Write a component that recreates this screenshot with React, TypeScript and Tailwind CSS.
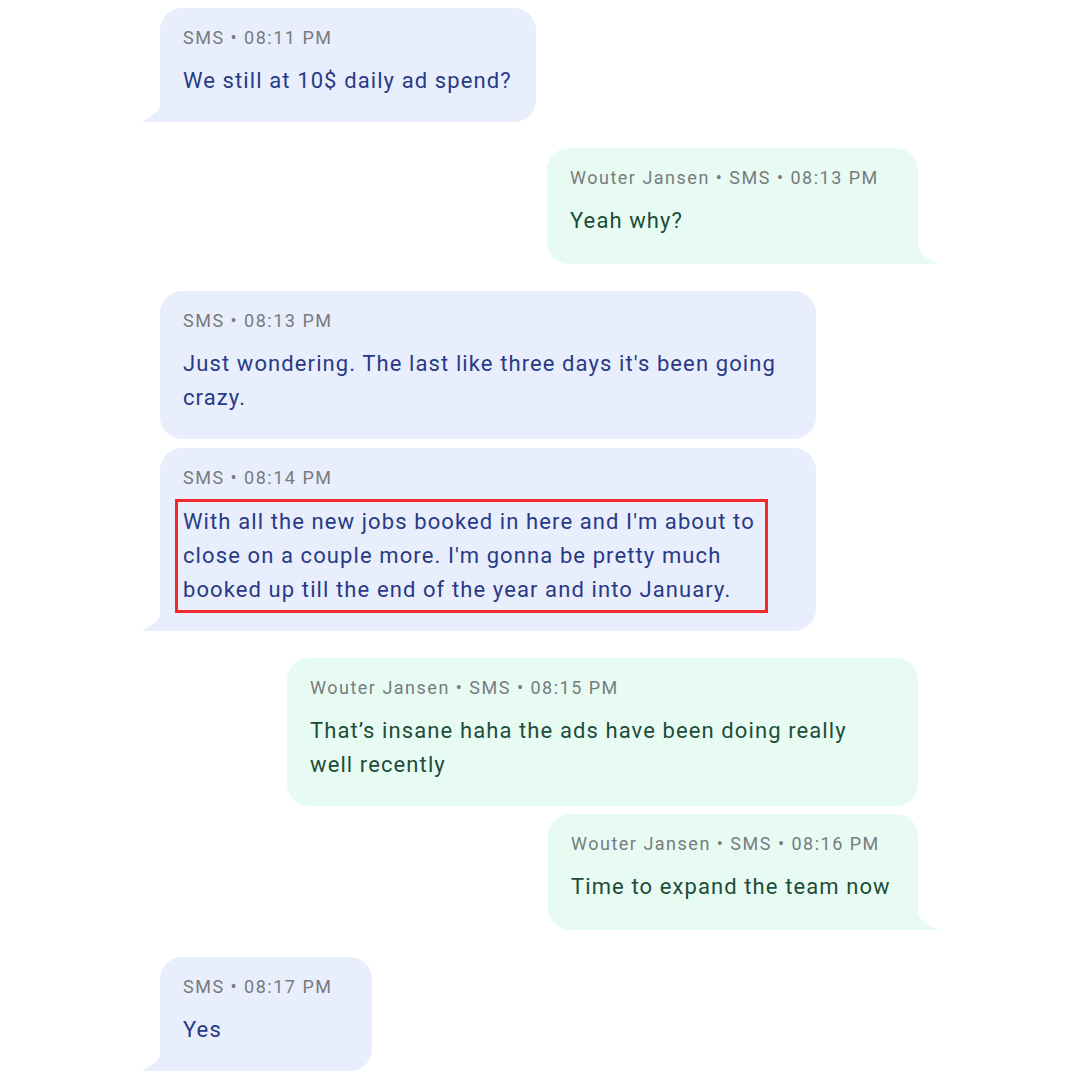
import React from "react";

type Side = "left" | "right";

function TailLeft() {
  return (
    <svg className="absolute bottom-0 left-[-19px]" width="20" height="19" viewBox="0 0 20 19">
      <path d="M20 0 Q18 11 0 19 L20 19 Z" fill="#e8eefb" />
    </svg>
  );
}

function TailRight() {
  return (
    <svg className="absolute bottom-0 right-[-22px]" width="23" height="20" viewBox="0 0 23 20">
      <path d="M0 0 Q3 14 23 20 L0 20 Z" fill="#e8fbf2" />
    </svg>
  );
}

function Bubble({
  side,
  meta,
  tail,
  widthClass,
  children,
}: {
  side: Side;
  meta: string;
  tail?: boolean;
  widthClass: string;
  children: React.ReactNode;
}) {
  const left = side === "left";
  return (
    <div
      className={
        "relative rounded-[22px] pl-[23px] pt-[18px] pb-[24px] " +
        (left ? "self-start ml-[160px] bg-[#e8eefb] " : "self-end mr-[162px] bg-[#e8fbf2] ") +
        (tail ? (left ? "rounded-bl-none " : "rounded-br-none ") : "") +
        widthClass
      }
    >
      <div className="text-[18px] leading-[24px] text-[#777b80] tracking-[1.5px] whitespace-nowrap">{meta}</div>
      {children}
      {tail && (left ? <TailLeft /> : <TailRight />)}
    </div>
  );
}

function Msg({ side, children }: { side: Side; children: React.ReactNode }) {
  return (
    <div
      className={
        "mt-[14px] text-[22px] leading-[34px] tracking-[1.1px] " +
        (side === "left" ? "text-[#283a85]" : "text-[#1c4d3a]")
      }
    >
      {children}
    </div>
  );
}

export default function App() {
  return (
    <div
      className="w-[1080px] h-[1080px] bg-white flex flex-col overflow-hidden pt-[8px]"
      style={{ fontFamily: "Roboto, 'Noto Sans', Arial, sans-serif" }}
    >
      <Bubble side="left" meta="SMS • 08:11 PM" tail widthClass="w-[376px] pr-[10px]">
        <Msg side="left">We still at 10$ daily ad spend?</Msg>
      </Bubble>

      <div className="h-[26px]" />
      <Bubble side="right" meta="Wouter Jansen • SMS • 08:13 PM" tail widthClass="w-[371px] pr-[10px] pb-[26px]">
        <Msg side="right">Yeah why?</Msg>
      </Bubble>

      <div className="h-[27px]" />
      <Bubble side="left" meta="SMS • 08:13 PM" widthClass="w-[656px] pr-[30px]">
        <Msg side="left">Just wondering. The last like three days it's been going crazy.</Msg>
      </Bubble>
      <div className="h-[9px]" />
      <Bubble side="left" meta="SMS • 08:14 PM" tail widthClass="w-[656px] pr-[30px]">
        <div className="mt-[9px] mb-[-6px] ml-[-8px] w-[593px] border-[3px] border-[#f1282c] px-[5px] py-[3px] text-[22px] leading-[34px] text-[#283a85] tracking-[1.1px] whitespace-nowrap">
          With all the new jobs booked in here and I'm about to
          <br />
          close on a couple more. I'm gonna be pretty much
          <br />
          booked up till the end of the year and into January.
        </div>
      </Bubble>

      <div className="h-[27px]" />
      <Bubble side="right" meta="Wouter Jansen • SMS • 08:15 PM" widthClass="w-[631px] pr-[60px]">
        <Msg side="right">That’s insane haha the ads have been doing really well recently</Msg>
      </Bubble>
      <div className="h-[8px]" />
      <Bubble side="right" meta="Wouter Jansen • SMS • 08:16 PM" tail widthClass="w-[370px] pr-[10px] pb-[26px]">
        <Msg side="right">Time to expand the team now</Msg>
      </Bubble>

      <div className="h-[27px]" />
      <Bubble side="left" meta="SMS • 08:17 PM" tail widthClass="w-[212px] pr-[10px]">
        <Msg side="left">Yes</Msg>
      </Bubble>
    </div>
  );
}
